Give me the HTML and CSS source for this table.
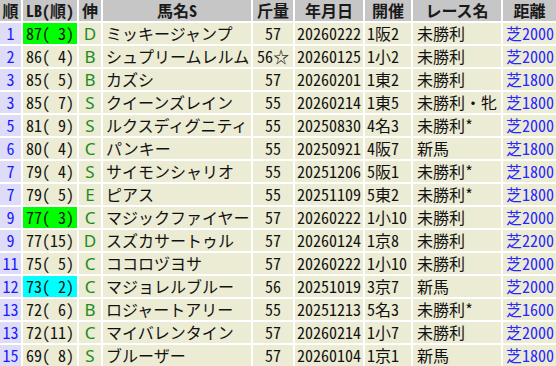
FILE: index.html
```html
<!DOCTYPE html>
<html lang="ja">
<head>
<meta charset="utf-8">
<link rel="stylesheet" href="styles.css">
</head>
<body>
<table class="tbl">
<colgroup>
<col class="c-rank"><col class="c-lb"><col class="c-nobi"><col class="c-name"><col class="c-kin"><col class="c-date"><col class="c-kai"><col class="c-race"><col class="c-dist">
</colgroup>
<thead>
<tr><th>順</th><th>LB(順)</th><th>伸</th><th>馬名S</th><th>斤量</th><th>年月日</th><th>開催</th><th>レース名</th><th>距離</th></tr>
</thead>
<tbody>
<tr><td class="rank">1</td><td class="lb hl-green">87( 3)</td><td class="nobi">D</td><td class="name">ミッキージャンプ</td><td class="kin">57</td><td class="date">20260222</td><td class="kai">1阪2</td><td class="race">未勝利</td><td class="dist">芝2000</td></tr>
<tr><td class="rank">2</td><td class="lb">86( 4)</td><td class="nobi">B</td><td class="name">シュプリームレルム</td><td class="kin">56☆</td><td class="date">20260125</td><td class="kai">1小2</td><td class="race">未勝利</td><td class="dist">芝2000</td></tr>
<tr><td class="rank">3</td><td class="lb">85( 5)</td><td class="nobi">B</td><td class="name">カズシ</td><td class="kin">57</td><td class="date">20260201</td><td class="kai">1東2</td><td class="race">未勝利</td><td class="dist">芝1800</td></tr>
<tr><td class="rank">3</td><td class="lb">85( 7)</td><td class="nobi">S</td><td class="name">クイーンズレイン</td><td class="kin">55</td><td class="date">20260214</td><td class="kai">1東5</td><td class="race">未勝利・牝</td><td class="dist">芝1800</td></tr>
<tr><td class="rank">5</td><td class="lb">81( 9)</td><td class="nobi">S</td><td class="name">ルクスディグニティ</td><td class="kin">55</td><td class="date">20250830</td><td class="kai">4名3</td><td class="race">未勝利*</td><td class="dist">芝2000</td></tr>
<tr><td class="rank">6</td><td class="lb">80( 4)</td><td class="nobi">C</td><td class="name">パンキー</td><td class="kin">55</td><td class="date">20250921</td><td class="kai">4阪7</td><td class="race">新馬</td><td class="dist">芝1800</td></tr>
<tr><td class="rank">7</td><td class="lb">79( 4)</td><td class="nobi">S</td><td class="name">サイモンシャリオ</td><td class="kin">55</td><td class="date">20251206</td><td class="kai">5阪1</td><td class="race">未勝利*</td><td class="dist">芝1800</td></tr>
<tr><td class="rank">7</td><td class="lb">79( 5)</td><td class="nobi">E</td><td class="name">ピアス</td><td class="kin">55</td><td class="date">20251109</td><td class="kai">5東2</td><td class="race">未勝利*</td><td class="dist">芝1800</td></tr>
<tr><td class="rank">9</td><td class="lb hl-green">77( 3)</td><td class="nobi">C</td><td class="name">マジックファイヤー</td><td class="kin">57</td><td class="date">20260222</td><td class="kai">1小10</td><td class="race">未勝利</td><td class="dist">芝2000</td></tr>
<tr><td class="rank">9</td><td class="lb">77(15)</td><td class="nobi">D</td><td class="name">スズカサートゥル</td><td class="kin">57</td><td class="date">20260124</td><td class="kai">1京8</td><td class="race">未勝利</td><td class="dist">芝2200</td></tr>
<tr><td class="rank">11</td><td class="lb">75( 5)</td><td class="nobi">C</td><td class="name">ココロヅヨサ</td><td class="kin">57</td><td class="date">20260222</td><td class="kai">1小10</td><td class="race">未勝利</td><td class="dist">芝2000</td></tr>
<tr><td class="rank">12</td><td class="lb hl-cyan">73( 2)</td><td class="nobi">C</td><td class="name">マジョレルブルー</td><td class="kin">56</td><td class="date">20251019</td><td class="kai">3京7</td><td class="race">新馬</td><td class="dist">芝2000</td></tr>
<tr><td class="rank">13</td><td class="lb">72( 6)</td><td class="nobi">B</td><td class="name">ロジャートアリー</td><td class="kin">55</td><td class="date">20251213</td><td class="kai">5名3</td><td class="race">未勝利*</td><td class="dist">芝1600</td></tr>
<tr><td class="rank">13</td><td class="lb">72(11)</td><td class="nobi">C</td><td class="name">マイバレンタイン</td><td class="kin">57</td><td class="date">20260214</td><td class="kai">1小7</td><td class="race">未勝利</td><td class="dist">芝2000</td></tr>
<tr><td class="rank">15</td><td class="lb">69( 8)</td><td class="nobi">S</td><td class="name">ブルーザー</td><td class="kin">57</td><td class="date">20260104</td><td class="kai">1京1</td><td class="race">新馬</td><td class="dist">芝1800</td></tr>
</tbody>
</table>
</body>
</html>
```
FILE: styles.css
```css
html, body {
  margin: 0;
  padding: 0;
  background: #ffffff;
}
.tbl {
  table-layout: fixed;
  width: 560px;
  margin: -2px;
  border-collapse: separate;
  border-spacing: 2px;
  font-family: "Noto Sans CJK JP", sans-serif;
  font-size: 16px;
  font-feature-settings: "hwid" 1;
  color: #111111;
}
.c-rank { width: 21px; }
.c-lb { width: 54px; }
.c-nobi { width: 22px; }
.c-name { width: 148px; }
.c-kin { width: 40px; }
.c-date { width: 68px; }
.c-kai { width: 46px; }
.c-race { width: 88px; }
.c-dist { width: 53px; }
.tbl th, .tbl td {
  height: 21px;
  padding: 0;
  line-height: 21px;
  white-space: pre;
}
.tbl th {
  background: #c6c6c6;
  font-weight: bold;
  text-align: center;
  color: #1a1a1a;
}
.tbl td {
  background: #ecebd3;
}
.tbl td.rank {
  background: #dedcf6;
  color: #1a1aff;
  text-align: center;
}
.tbl td.lb { padding-left: 3px; text-align: left; }
.tbl td.hl-green { background: #00ff00; }
.tbl td.hl-cyan { background: #00ffff; }
.tbl td.nobi {
  text-align: center;
  color: #1e8a1e;
  font-family: "Noto Sans", sans-serif;
  font-size: 17px;
  font-feature-settings: normal;
}
.tbl td.name { padding-left: 3px; text-align: left; }
.tbl td.kin { text-align: center; }
.tbl td.date { text-align: center; }
.tbl td.kai { padding-left: 2px; text-align: left; }
.tbl td.race { padding-left: 4px; text-align: left; }
.tbl td.dist { padding-left: 3px; text-align: left; color: #2626ff; }
```
